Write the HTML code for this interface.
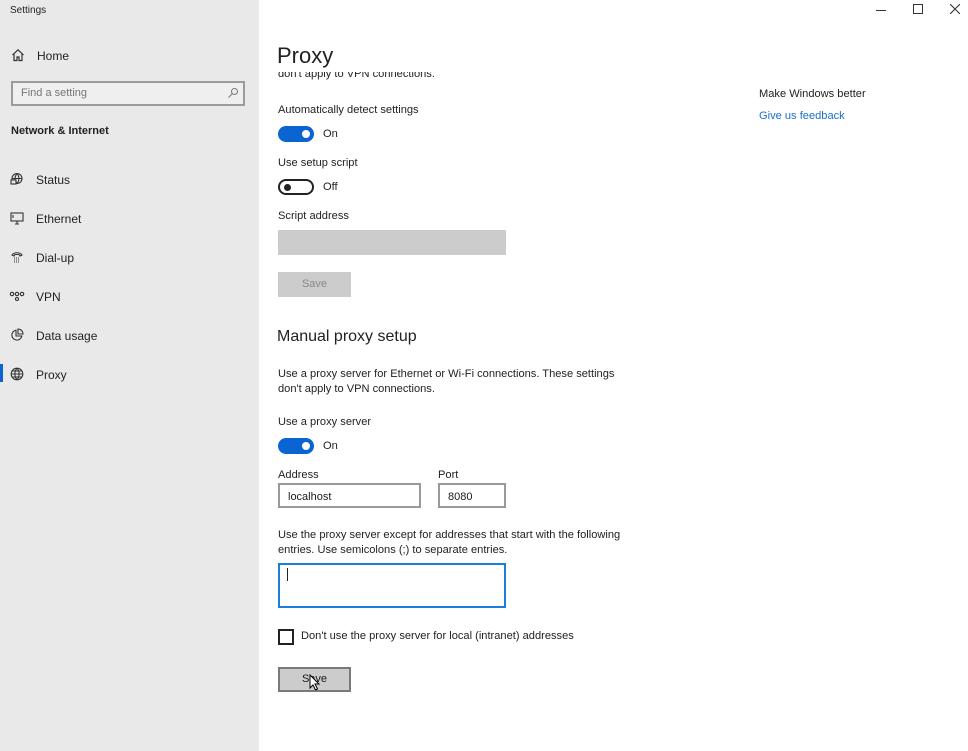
<!DOCTYPE html>
<html><head><meta charset="utf-8"><style>
*{margin:0;padding:0;box-sizing:border-box}
body{width:968px;height:751px;overflow:hidden;background:#fff;font-family:"Liberation Sans",sans-serif;color:#1a1a1a;position:relative}
.a{position:absolute;white-space:nowrap}
#side{position:absolute;left:0;top:0;width:259px;height:751px;background:#e9e9e9}
.nav{font-size:12px;color:#222}
.s{font-size:11.1px;color:#222}
.tg{position:absolute;width:36px;height:16px;border-radius:8px}
.tg.on{background:#0a64d2}
.tg.on::after{content:"";position:absolute;right:4px;top:4px;width:8px;height:8px;border-radius:50%;background:#fff}
.tg.off{border:2px solid #222;background:#fff}
.tg.off::after{content:"";position:absolute;left:4px;top:3px;width:7px;height:7px;border-radius:50%;background:#222}
.box{position:absolute;border:2px solid #9a9a9a;background:#fff;font-size:11px;padding:6px 0 0 8px}
svg{position:absolute}
</style></head><body>
<div id="side">
<div class="a" style="left:10px;top:5px;font-size:10px;color:#222">Settings</div>
<svg style="left:11px;top:48px" width="14" height="14" viewBox="0 0 14 14" fill="none" stroke="#333" stroke-width="1.2"><path d="M1.5 7L7 1.8 12.5 7M3 5.8V12.5h3V9h2v3.5h3V5.8"/></svg>
<div class="a nav" style="left:37px;top:49px">Home</div>
<div class="a" style="left:11px;top:81px;width:234px;height:25px;border:2px solid #9b9b9b;background:#efefef"></div>
<div class="a" style="left:21px;top:87px;font-size:11px;color:#777">Find a setting</div>
<svg style="left:227px;top:87px" width="12" height="12" viewBox="0 0 12 12" fill="none" stroke="#777" stroke-width="1"><circle cx="7.5" cy="4.5" r="3"/><path d="M5.3 6.7L1.5 10.5"/></svg>
<div class="a" style="left:11px;top:125px;font-size:11px;font-weight:bold;color:#222">Network &amp; Internet</div>
<svg style="left:10px;top:172px" width="14" height="14" viewBox="0 0 14 14" fill="none" stroke="#333" stroke-width="1.1"><circle cx="7" cy="6.5" r="5"/><path d="M2 6.5h10M7 1.5c-2.5 3-2.5 7 0 10M7 1.5c2.5 3 2.5 7 0 10"/><rect x="1" y="8" width="5" height="4" fill="#e9e9e9"/></svg>
<div class="a nav" style="left:36px;top:173px">Status</div>
<svg style="left:10px;top:211px" width="14" height="14" viewBox="0 0 14 14" fill="none" stroke="#333" stroke-width="1.1"><rect x="1" y="2" width="12" height="8"/><path d="M5 13h4M7 10v3M3 4v3"/></svg>
<div class="a nav" style="left:36px;top:212px">Ethernet</div>
<svg style="left:10px;top:250px" width="14" height="14" viewBox="0 0 14 14" fill="none" stroke="#333" stroke-width="1.1"><path d="M2 5c2-3 8-3 10 0l-2 1-1-1.5H5L4 6z"/><path d="M4 8h6M4 10h6M4 12h6" stroke-dasharray="1 1"/></svg>
<div class="a nav" style="left:36px;top:251px">Dial-up</div>
<svg style="left:9px;top:290px" width="16" height="12" viewBox="0 0 16 12" fill="none" stroke="#333" stroke-width="1.1"><circle cx="3" cy="4" r="1.7"/><circle cx="8" cy="4" r="1.7"/><circle cx="13" cy="4" r="1.7"/><circle cx="8" cy="9" r="1.5"/></svg>
<div class="a nav" style="left:36px;top:290px">VPN</div>
<svg style="left:10px;top:328px" width="14" height="14" viewBox="0 0 14 14" fill="none" stroke="#333" stroke-width="1.1"><path d="M6 2.2A5 5 0 1 0 11.8 8H6z"/><path d="M8 1v5h5A5 5 0 0 0 8 1z"/></svg>
<div class="a nav" style="left:36px;top:329px">Data usage</div>
<div class="a" style="left:0;top:364px;width:3px;height:18px;background:#0a64d2"></div>
<svg style="left:10px;top:367px" width="14" height="14" viewBox="0 0 14 14" fill="none" stroke="#333" stroke-width="1.1"><circle cx="7" cy="7" r="5.8"/><path d="M1.2 7h11.6M7 1.2c-2.8 3.3-2.8 8.3 0 11.6M7 1.2c2.8 3.3 2.8 8.3 0 11.6M2 4h10M2 10h10"/></svg>
<div class="a nav" style="left:36px;top:368px">Proxy</div>
</div>
<div class="a" style="left:876px;top:10px;width:10px;height:1px;background:#333"></div>
<div class="a" style="left:913px;top:4px;width:10px;height:10px;border:1px solid #333"></div>
<svg style="left:950px;top:4px" width="10" height="10" viewBox="0 0 10 10" stroke="#333" stroke-width="1.1"><path d="M0 0L10 10M10 0L0 10"/></svg>

<div class="a" style="left:277px;top:43px;font-size:22px;color:#222">Proxy</div>
<div class="a s" style="left:278px;top:72px;height:9px;overflow:hidden"><div style="margin-top:-4px">don't apply to VPN connections.</div></div>
<div class="a s" style="left:278px;top:104px">Automatically detect settings</div>
<div class="tg on" style="left:278px;top:126px"></div>
<div class="a s" style="left:323px;top:128px">On</div>
<div class="a s" style="left:278px;top:157px">Use setup script</div>
<div class="tg off" style="left:278px;top:179px"></div>
<div class="a s" style="left:323px;top:181px">Off</div>
<div class="a s" style="left:278px;top:210px">Script address</div>
<div class="a" style="left:278px;top:230px;width:228px;height:25px;background:#cccccc"></div>
<div class="a" style="left:278px;top:272px;width:73px;height:25px;background:#cccccc;color:#888;font-size:11px;text-align:center;line-height:25px">Save</div>
<div class="a" style="left:277px;top:328px;font-size:16px;color:#222">Manual proxy setup</div>
<div class="a s" style="left:278px;top:367px;line-height:15px">Use a proxy server for Ethernet or Wi-Fi connections. These settings<br>don't apply to VPN connections.</div>
<div class="a s" style="left:278px;top:416px">Use a proxy server</div>
<div class="tg on" style="left:278px;top:438px"></div>
<div class="a s" style="left:323px;top:440px">On</div>
<div class="a s" style="left:278px;top:469px">Address</div>
<div class="a s" style="left:438px;top:469px">Port</div>
<div class="box" style="left:278px;top:483px;width:143px;height:25px">localhost</div>
<div class="box" style="left:438px;top:483px;width:68px;height:25px">8080</div>
<div class="a s" style="left:278px;top:528px;line-height:15px">Use the proxy server except for addresses that start with the following<br>entries. Use semicolons (;) to separate entries.</div>
<div class="a" style="left:278px;top:563px;width:228px;height:45px;border:2px solid #1a7fd8;background:#fff"></div>
<div class="a" style="left:287px;top:568px;width:1px;height:13px;background:#222"></div>
<div class="a" style="left:278px;top:629px;width:16px;height:16px;border:2px solid #222"></div>
<div class="a s" style="left:301px;top:630px">Don't use the proxy server for local (intranet) addresses</div>
<div class="a" style="left:278px;top:667px;width:73px;height:25px;background:#cccccc;border:2px solid #7a7a7a;font-size:11px;text-align:center;line-height:21px">Save</div>
<svg style="left:309px;top:674px" width="12" height="18" viewBox="0 0 12 18"><path d="M1 1v13l3-3 2.5 5 2-1-2.5-5h4z" fill="#fff" stroke="#000" stroke-width="1"/></svg>

<div class="a s" style="left:759px;top:88px">Make Windows better</div>
<div class="a s" style="left:759px;top:110px;color:#1a6fc9">Give us feedback</div>
</body></html>
